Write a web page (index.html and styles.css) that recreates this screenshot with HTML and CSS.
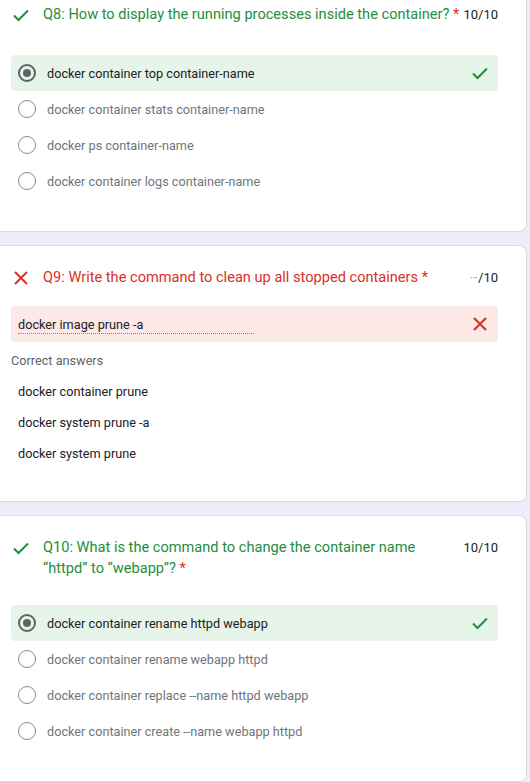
FILE: index.html
```html
<!DOCTYPE html>
<html lang="en">
<head>
<meta charset="utf-8">
<title>Quiz results</title>
<link rel="stylesheet" href="styles.css">
</head>
<body>
<main class="page">

  <section class="card card--first">
    <div class="q-head">
      <svg class="q-icon" viewBox="0 0 20 20"><polyline class="ok-stroke" points="3,10.5 7.5,15 17,5.5"/></svg>
      <h2 class="q-title q-title--ok q-title--single">Q8: How to display the running processes inside the container?&nbsp;<span class="req">*</span></h2>
      <span class="points">10/10</span>
    </div>
    <ul class="options options--loose">
      <li class="option option--correct">
        <span class="radio radio--on"></span>
        <span class="opt-text opt-text--chosen">docker container top container-name</span>
        <svg class="opt-mark" viewBox="0 0 20 20"><polyline class="ok-stroke" points="3,10.5 7.5,15 17,5.5"/></svg>
      </li>
      <li class="option"><span class="radio"></span><span class="opt-text">docker container stats container-name</span></li>
      <li class="option"><span class="radio"></span><span class="opt-text">docker ps container-name</span></li>
      <li class="option"><span class="radio"></span><span class="opt-text">docker container logs container-name</span></li>
    </ul>
  </section>

  <section class="card">
    <div class="q-head">
      <svg class="q-icon" viewBox="0 0 20 20"><path class="bad-stroke" d="M4 4 L16 16 M16 4 L4 16"/></svg>
      <h2 class="q-title q-title--bad">Q9: Write the command to clean up all stopped containers&nbsp;<span class="req">*</span></h2>
      <span class="points"><span class="dots">···</span>/10</span>
    </div>
    <div class="answer answer--wrong">
      <span class="answer-text">docker image prune -a</span>
      <svg class="opt-mark" viewBox="0 0 20 20"><path class="bad-stroke" d="M4 4 L16 16 M16 4 L4 16"/></svg>
    </div>
    <div class="correct-label">Correct answers</div>
    <ul class="correct-list">
      <li>docker container prune</li>
      <li>docker system prune -a</li>
      <li>docker system prune</li>
    </ul>
  </section>

  <section class="card">
    <div class="q-head">
      <svg class="q-icon" viewBox="0 0 20 20"><polyline class="ok-stroke" points="3,10.5 7.5,15 17,5.5"/></svg>
      <h2 class="q-title q-title--ok">Q10: What is the command to change the container name “httpd” to “webapp”?&nbsp;<span class="req">*</span></h2>
      <span class="points">10/10</span>
    </div>
    <ul class="options">
      <li class="option option--correct">
        <span class="radio radio--on"></span>
        <span class="opt-text opt-text--chosen">docker container rename httpd webapp</span>
        <svg class="opt-mark" viewBox="0 0 20 20"><polyline class="ok-stroke" points="3,10.5 7.5,15 17,5.5"/></svg>
      </li>
      <li class="option"><span class="radio"></span><span class="opt-text">docker container rename webapp httpd</span></li>
      <li class="option"><span class="radio"></span><span class="opt-text">docker container replace --name httpd webapp</span></li>
      <li class="option"><span class="radio"></span><span class="opt-text">docker container create --name webapp httpd</span></li>
    </ul>
  </section>

</main>
</body>
</html>
```

FILE: styles.css
```css
* { box-sizing: border-box; }

html, body {
  margin: 0;
  padding: 0;
  background: #f0ebf8;
  font-family: Roboto, "Liberation Sans", Arial, sans-serif;
  color: #202124;
}

.page {
  display: flex;
  flex-direction: column;
  gap: 13px;
  width: 527px;
}

.card {
  background: #fff;
  border: 1px solid #dadce0;
  border-left: none;
  border-radius: 0 8px 8px 0;
  padding: 21px 28px 32px 11px;
}

.card--first { margin-top: -18px; }

.q-head {
  display: flex;
  align-items: flex-start;
}

.q-icon {
  width: 20px;
  height: 20px;
  flex: none;
  margin-top: 1px;
}

.ok-stroke {
  fill: none;
  stroke: #1e8e3e;
  stroke-width: 2;
}

.bad-stroke {
  fill: none;
  stroke: #d93025;
  stroke-width: 2;
}

.q-title {
  flex: 1;
  margin: 0 0 0 12px;
  font-size: 14.6px;
  font-weight: 400;
  line-height: 21px;
}

.q-title--single { white-space: nowrap; }

.q-title--ok { color: #1e8e3e; }
.q-title--bad { color: #d93025; }

.req { color: #d93025; }

.points {
  flex: none;
  margin-left: 2px;
  font-size: 13px;
  line-height: 21px;
  color: #202124;
  text-align: right;
}

.dots {
  color: #9aa0a6;
  letter-spacing: -1px;
  margin-right: 1px;
}

.options {
  list-style: none;
  margin: 26px 0 0;
  padding: 0;
}

.options--loose { margin-top: 30px; }

.option {
  display: flex;
  align-items: center;
  height: 36px;
  padding: 0 8px 0 7px;
  border-radius: 4px;
}

.option--correct { background: #e6f4ea; }

.radio {
  width: 18px;
  height: 18px;
  flex: none;
  border-radius: 50%;
  border: 1.5px solid #8a8d91;
  display: flex;
  align-items: center;
  justify-content: center;
}

.radio--on {
  border: 2px solid #5f6368;
}

.radio--on::after {
  content: "";
  width: 8px;
  height: 8px;
  border-radius: 50%;
  background: #5f6368;
}

.opt-text {
  flex: 1;
  margin-left: 11px;
  font-size: 12.7px;
  color: #70757a;
}

.opt-text--chosen { color: #202124; }

.opt-mark {
  width: 20px;
  height: 20px;
  flex: none;
  margin-left: auto;
}

.answer {
  display: flex;
  align-items: center;
  height: 36px;
  margin-top: 18px;
  padding: 0 8px 0 7px;
  border-radius: 4px;
}

.answer--wrong { background: #fce8e6; }

.answer-text {
  display: inline-block;
  width: 236px;
  font-size: 12.7px;
  line-height: 15px;
  padding-top: 3px;
  padding-bottom: 1px;
  border-bottom: 1px dotted #80868b;
  color: #202124;
}

.correct-label {
  margin-top: 9px;
  font-size: 12.7px;
  line-height: 20px;
  color: #5f6368;
}

.correct-list {
  list-style: none;
  margin: 5px 0 0;
  padding: 0 0 0 7px;
}

.correct-list li {
  font-size: 12.7px;
  line-height: 31px;
  color: #202124;
}
```
